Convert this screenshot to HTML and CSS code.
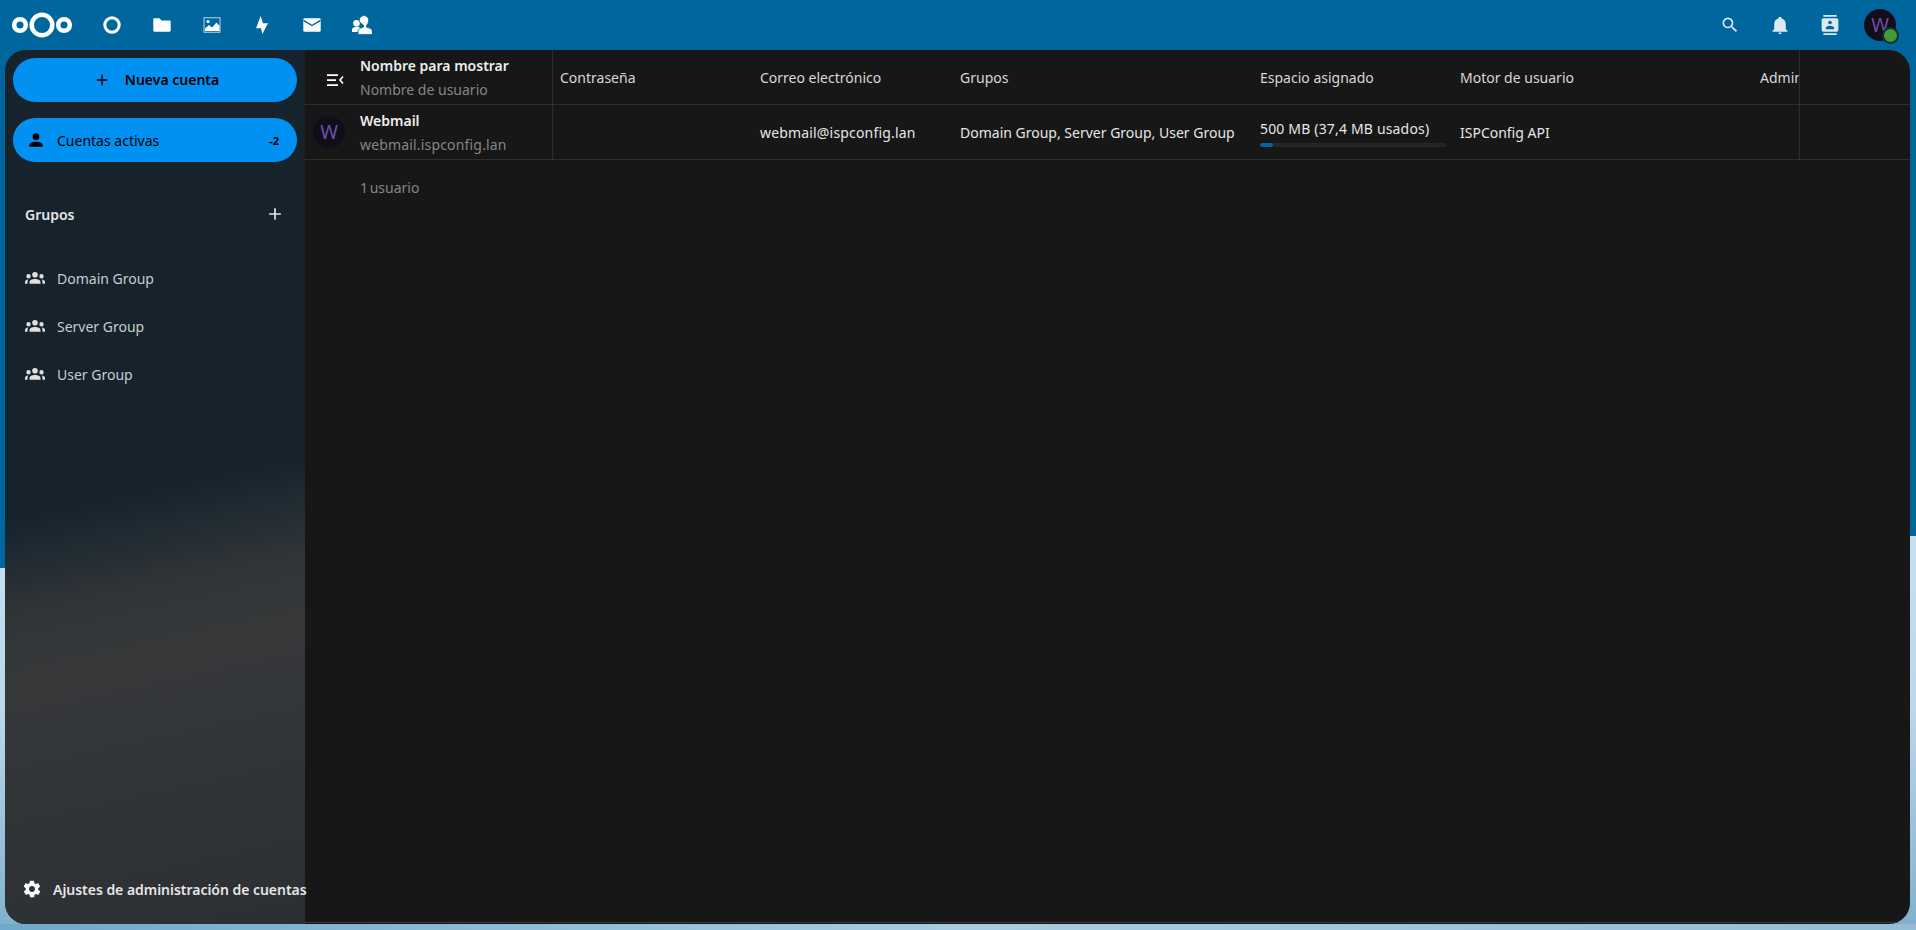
FILE: index.html
```html
<!DOCTYPE html>
<html lang="es">
<head>
<meta charset="utf-8">
<title>Cuentas</title>
<link rel="stylesheet" href="styles.css">
</head>
<body>
<div class="backdrop">
  <svg class="backdrop-art" viewBox="0 0 1916 930" preserveAspectRatio="none" aria-hidden="true">
    <defs>
      <linearGradient id="sky" x1="0" y1="0" x2="0" y2="1">
        <stop offset="0" stop-color="#c8e0ef"/>
        <stop offset="0.45" stop-color="#bbd7e9"/>
        <stop offset="1" stop-color="#7fb0cf"/>
      </linearGradient>
      <linearGradient id="strip" x1="0" y1="0" x2="1" y2="0">
        <stop offset="0" stop-color="#6fa8ca"/>
        <stop offset="0.5" stop-color="#a6cde2"/>
        <stop offset="1" stop-color="#93bcd6"/>
      </linearGradient>
    </defs>
    <path d="M0 568 L1916 536 V930 H0 Z" fill="url(#sky)"/>
    <rect x="0" y="924" width="1916" height="6" fill="url(#strip)"/>
  </svg>
</div>
<header class="topbar">
  <div class="topbar-left">
    <svg class="logo" viewBox="0 0 60 28" aria-hidden="true">
      <g fill="none" stroke="#fff" stroke-width="4.500">
        <circle cx="30" cy="14" r="10.300"/>
        <circle cx="8" cy="14" r="5.800"/>
        <circle cx="52" cy="14" r="5.800"/>
      </g>
    </svg>
    <nav class="apps">
      <a class="app"><svg viewBox="0 0 20 20"><circle cx="10" cy="10" r="7.200" fill="none" stroke="#fff" stroke-width="3"/></svg></a>
      <a class="app"><svg viewBox="0 0 20 20"><path fill="#fff" d="M2.500 3.300h5l2 2.200h8c.7 0 1.200.5 1.200 1.200v8.800c0 .7-.5 1.200-1.200 1.200h-15c-.7 0-1.200-.5-1.200-1.200V4.500c0-.7.500-1.200 1.200-1.200z"/></svg></a>
      <a class="app"><svg viewBox="0 0 20 20"><path fill="#fff" fill-opacity=".72" fill-rule="evenodd" d="M1.500 2.300h17v15.400h-17zM2.500 3.300v13.400h15V3.300z"/><path fill="#fff" d="M3 16v-2.500l4-3.500 3 2.500 4.500-5 3 3.500V16z"/><circle cx="6" cy="6.500" r="1.600" fill="#fff"/></svg></a>
      <a class="app"><svg viewBox="0 0 20 20"><path fill="#fff" d="M8.700 1 4 13.300h5L10.300 19 16 8.300h-5z"/></svg></a>
      <a class="app"><svg viewBox="0 0 20 20"><rect x="1.300" y="3.300" width="17.400" height="13.400" rx="1.200" fill="#fff"/><path fill="none" stroke="#00679e" stroke-width="1.400" d="M1.500 5.300 10 10.500l8.500-5.200"/></svg></a>
      <a class="app"><svg viewBox="0 0 20 20"><circle cx="4.500" cy="8.300" r="3.300" fill="#fff"/><path fill="#fff" d="M0 14.800c0-1.800 2.300-2.300 3-3h3.500l2.500 2-2.500 3.200H0z"/><path fill="#fff" stroke="#00679e" stroke-width=".8" d="M12 .6c2.700 0 4.700 2.200 4.700 5 0 1.900-.9 3.600-2.200 4.500v2c2.200.9 5.900 1.500 5.900 3.900v3.400H6v-3.400c0-2.400 3.300-3 5.500-3.900v-2C10.200 9.200 7.300 7.500 7.300 5.600c0-2.800 2-5 4.700-5z"/></svg></a>
    </nav>
  </div>
  <div class="topbar-right">
    <a class="tool"><svg viewBox="0 0 24 24"><path fill="#dbe9f2" d="M9.500 3a6.500 6.500 0 0 1 6.500 6.500c0 1.610-.59 3.090-1.560 4.230l.27.27h.79l5 5-1.500 1.500-5-5v-.79l-.27-.27A6.516 6.516 0 0 1 9.500 16 6.500 6.500 0 0 1 3 9.500 6.500 6.500 0 0 1 9.500 3m0 2C7 5 5 7 5 9.500S7 14 9.500 14 14 12 14 9.500 12 5 9.500 5z"/></svg></a>
    <a class="tool"><svg viewBox="0 0 24 24"><path fill="#dbe9f2" d="M21 19v1H3v-1l2-2v-6c0-3.100 2.030-5.830 5-6.710V4a2 2 0 0 1 2-2 2 2 0 0 1 2 2v.29c2.970.88 5 3.610 5 6.710v6zm-7 2a2 2 0 0 1-2 2 2 2 0 0 1-2-2z"/></svg></a>
    <a class="tool"><svg viewBox="0 0 24 24"><path fill="#dbe9f2" d="M20 0H4v2h16zM4 24h16v-2H4zM20 4H4C2.900 4 2 4.900 2 6v12c0 1.100.9 2 2 2h16c1.100 0 2-.9 2-2V6c0-1.100-.9-2-2-2zm-8 2.800c1.200 0 2.200 1 2.200 2.200s-1 2.200-2.200 2.200-2.200-1-2.200-2.200 1-2.200 2.200-2.200zM17 17H7v-1.500c0-1.700 3.300-2.500 5-2.500s5 .8 5 2.500z"/></svg></a>
    <div class="user-avatar">W<span class="status-dot"></span></div>
  </div>
</header>
<main class="shell">
  <aside class="sidebar">
    <div class="sidebar-top">
      <button class="new-account"><svg class="ic18" viewBox="0 0 24 24"><path fill="#000" d="M19 13h-6v6h-2v-6H5v-2h6V5h2v6h6z"/></svg><span>Nueva cuenta</span></button>
      <a class="nav-active">
        <svg class="ic20" viewBox="0 0 24 24"><path fill="#000" d="M12 4a4 4 0 1 1 0 8 4 4 0 0 1 0-8zm0 10c4.400 0 8 1.800 8 4v2H4v-2c0-2.200 3.600-4 8-4z"/></svg>
        <span class="nav-label">Cuentas activas</span>
        <span class="count">-2</span>
      </a>
      <div class="groups-head"><span>Grupos</span><svg class="ic20" viewBox="0 0 24 24"><path fill="#e6e6e6" d="M19 13h-6v6h-2v-6H5v-2h6V5h2v6h6z"/></svg></div>
      <ul class="groups">
        <li class="group"><svg class="ic24" viewBox="0 0 24 24"><use href="#grp"/></svg>Domain Group</li>
        <li class="group"><svg class="ic24" viewBox="0 0 24 24"><use href="#grp"/></svg>Server Group</li>
        <li class="group"><svg class="ic24" viewBox="0 0 24 24"><use href="#grp"/></svg>User Group</li>
      </ul>
    </div>
    <a class="settings"><svg class="ic20" viewBox="0 0 24 24"><path fill="#fff" d="M12 15.500a3.500 3.500 0 1 1 0-7 3.500 3.500 0 0 1 0 7zm7.400-2.500c.1-.3.100-.7.100-1s0-.7-.1-1l2.100-1.700c.2-.2.300-.4.100-.6l-2-3.500c-.1-.2-.4-.3-.6-.2l-2.500 1c-.5-.4-1.100-.7-1.700-1l-.4-2.600c0-.2-.2-.4-.5-.4h-4c-.3 0-.4.200-.5.400l-.4 2.600c-.6.300-1.200.6-1.700 1l-2.500-1c-.2-.1-.5 0-.6.200l-2 3.500c-.1.200-.1.500.1.600L4.600 11c-.1.300-.1.700-.1 1s0 .7.100 1l-2.100 1.700c-.2.200-.3.400-.1.600l2 3.500c.1.200.4.300.6.200l2.500-1c.5.400 1.100.7 1.700 1l.4 2.600c0 .2.200.4.500.4h4c.3 0 .4-.2.500-.4l.4-2.600c.6-.3 1.200-.6 1.700-1l2.500 1c.2.100.5 0 .6-.2l2-3.500c.1-.2.100-.4-.1-.6z"/></svg><span class="settings-label">Ajustes de administración de cuentas</span></a>
  </aside>
  <section class="content">
    <div class="row head">
      <div class="cell c-toggle"><svg class="toggle-icon" viewBox="0 0 20 20"><path fill="#fff" d="M2 4.200h11v1.700H2zm0 5h9v1.700H2zm0 5h11v1.700H2z"/><path fill="none" stroke="#fff" stroke-width="1.600" d="M18 6.500 15 10l3 3.500"/></svg></div>
      <div class="cell c-name"><strong>Nombre para mostrar</strong><span class="muted">Nombre de usuario</span></div>
      <div class="cell c-pass">Contraseña</div>
      <div class="cell c-mail">Correo electrónico</div>
      <div class="cell c-groups">Grupos</div>
      <div class="cell c-quota">Espacio asignado</div>
      <div class="cell c-backend">Motor de usuario</div>
      <div class="cell c-admin"><span class="clip">Administrador</span></div>
    </div>
    <div class="row">
      <div class="cell c-toggle"><div class="row-avatar">W</div></div>
      <div class="cell c-name"><strong>Webmail</strong><span class="muted wide">webmail.ispconfig.lan</span></div>
      <div class="cell c-pass"></div>
      <div class="cell c-mail wide">webmail@ispconfig.lan</div>
      <div class="cell c-groups">Domain Group, Server Group, User Group</div>
      <div class="cell c-quota quota-value"><span class="wide">500 MB (37,4 MB usados)</span><div class="bar"><div class="bar-fill"></div></div></div>
      <div class="cell c-backend">ISPConfig API</div>
      <div class="cell c-admin"></div>
    </div>
    <div class="foot muted">1 usuario</div>
    <div class="end-line"></div>
  </section>
</main>
<svg class="defs" aria-hidden="true"><defs><g id="grp"><path fill="#e0e0e0" d="M12 6a2.800 2.800 0 1 1 0 5.600A2.800 2.800 0 0 1 12 6zM5.500 8a2.200 2.200 0 1 1 0 4.400 2.200 2.200 0 0 1 0-4.400zm13 0a2.200 2.200 0 1 1 0 4.400 2.200 2.200 0 0 1 0-4.400zM12 13c3 0 5.500 1.300 5.500 3v1.800h-11V16c0-1.700 2.500-3 5.500-3zm-6.800.500c-.5.700-.7 1.500-.7 2.500v1.800H2V16c0-1.300 1.300-2.300 3.200-2.500zm13.600 0c1.900.2 3.200 1.200 3.200 2.500v1.800h-2.500V16c0-1-.2-1.800-.7-2.500z"/></g></defs></svg>
</body>
</html>
```
FILE: styles.css
```css
* { box-sizing: border-box; }
html, body { margin: 0; height: 100%; overflow: hidden; }
body {
  width: 1916px;
  height: 930px;
  background: #00679e;
  font-family: "Noto Sans", sans-serif;
  font-size: 14px;
  color: #e6e6e6;
  display: flex;
  flex-direction: column;
  position: relative;
}
.backdrop { position: absolute; inset: 0; }
.backdrop-art { width: 100%; height: 100%; display: block; }
.defs { position: absolute; width: 0; height: 0; }
.topbar {
  position: relative;
  height: 50px;
  display: flex;
  justify-content: space-between;
  align-items: center;
}
.topbar-left { display: flex; align-items: center; }
.logo { width: 60px; height: 28px; margin-left: 12px; }
.apps { display: flex; margin-left: 15px; }
.app { width: 50px; height: 50px; display: flex; align-items: center; justify-content: center; }
.app svg { width: 20px; height: 20px; }
.topbar-right { display: flex; align-items: center; padding-right: 20px; }
.tool { width: 50px; height: 50px; display: flex; align-items: center; justify-content: center; }
.tool svg { width: 20px; height: 20px; }
.user-avatar {
  position: relative;
  width: 32px; height: 32px;
  margin-left: 9px;
  border-radius: 50%;
  background: #110e1a;
  color: #6f4ea5;
  font-size: 19px;
  display: flex; align-items: center; justify-content: center;
}
.status-dot {
  position: absolute;
  right: -3px; bottom: -3px;
  width: 17px; height: 17px;
  border-radius: 50%;
  background: #3f9c3c;
  border: 2px solid #1d2a2a;
}
.shell {
  position: relative;
  flex: 1;
  display: flex;
  margin: 0 6px 6px 5px;
  border-radius: 21px;
  overflow: hidden;
  background: #171717;
}
.sidebar {
  width: 300px;
  flex: none;
  display: flex;
  flex-direction: column;
  justify-content: space-between;
  background: linear-gradient(168deg, #16232d 0%, #16232d 50%, #1f2a32 54%, #323537 61%, #36383a 68%, #2b2f33 100%);
}
.sidebar-top { padding: 8px 8px 0; display: flex; flex-direction: column; }
.ic18 { width: 18px; height: 18px; flex: none; }
.ic20 { width: 20px; height: 20px; flex: none; }
.ic24 { width: 24px; height: 24px; flex: none; }
.new-account {
  height: 44px;
  border: 0;
  border-radius: 22px;
  background: #0091f2;
  color: #000;
  font: 600 14px "Noto Sans", sans-serif;
  display: flex; align-items: center; justify-content: center; gap: 14px;
  padding: 0 0 1px 2px;
}
.nav-active {
  margin-top: 16px;
  height: 44px;
  border-radius: 22px;
  background: #0091f2;
  color: #000;
  display: flex; align-items: center;
  padding: 0 18px 0 13px;
}
.nav-label { margin-left: 11px; flex: 1; }
.count { font-size: 11px; font-weight: 700; }
.groups-head {
  margin-top: 30px;
  height: 44px;
  padding: 0 12px 0 12px;
  display: flex; align-items: center; justify-content: space-between;
  font-weight: 600;
  color: #e6e6e6;
}
.groups { list-style: none; margin: 18px 0 0; padding: 0; }
.group {
  height: 48px;
  display: flex; align-items: center; gap: 10px;
  padding-left: 10px;
  color: #c8cbcd;
}
.settings {
  height: 44px;
  margin-bottom: 13px;
  display: flex; align-items: center; gap: 11px;
  padding-left: 17px;
  font-weight: 600;
  color: #e6e6e6;
  white-space: nowrap;
}
.settings-label { letter-spacing: -0.03px; }
.content { flex: 1; min-width: 0; display: flex; flex-direction: column; }
.row {
  height: 55px;
  flex: none;
  display: flex;
  border-bottom: 1px solid #2e2e2e;
}
.cell { display: flex; flex-direction: column; justify-content: center; padding-left: 7px; white-space: nowrap; flex: none; }
.head .cell { color: #d8d8d8; }
.wide { letter-spacing: 0.17px; }
.c-toggle { width: 48px; padding: 0; align-items: center; }
.toggle-icon { width: 20px; height: 20px; margin: 6px 0 0 12px; }
.c-name { width: 200px; padding-top: 1px; border-right: 1px solid #2e2e2e; line-height: 24px; }
.c-name strong { font-weight: 600; color: #ededed; }
.muted { color: #858585; }
.c-pass { width: 200px; }
.c-mail { width: 200px; }
.c-groups { width: 300px; }
.c-quota { width: 200px; }
.quota-value { padding-top: 2px; }
.c-backend { width: 300px; }
.c-admin { width: 47px; overflow: hidden; border-right: 1px solid #2e2e2e; }
.clip { display: block; overflow: hidden; }
.row-avatar {
  width: 32px; height: 32px;
  border-radius: 50%;
  background: #110e1a;
  color: #6f4ea5;
  font-size: 19px;
  display: flex; align-items: center; justify-content: center;
}
.bar { height: 4px; width: 186px; margin-top: 5px; border-radius: 2px; background: #262626; overflow: hidden; }
.bar-fill { height: 100%; width: 7%; background: #00679e; border-radius: 2px; }
.foot { padding: 18px 0 0 55px; word-spacing: -2px; }
.end-line { margin-top: auto; margin-bottom: 1px; height: 1px; background: #3a3a3a; }
```
